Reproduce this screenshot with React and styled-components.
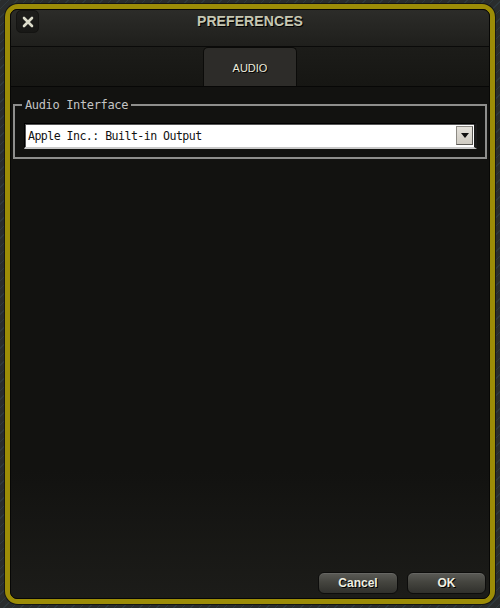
import React from "react";
import styled, { createGlobalStyle } from "styled-components";

const Global = createGlobalStyle`
  html, body { margin: 0; padding: 0; }
  body {
    width: 500px;
    height: 608px;
    overflow: hidden;
    background-color: #2a2d2d;
    background-image: repeating-linear-gradient(
      135deg,
      rgba(70, 110, 130, 0.18) 0px,
      rgba(70, 110, 130, 0.18) 1px,
      transparent 1px,
      transparent 6px
    );
    font-family: "Liberation Sans", Arial, sans-serif;
  }
`;

const Frame = styled.div`
  box-sizing: border-box;
  margin: 4px 5px 0 5px;
  height: 600px;
  border: 5px solid #9c8c07;
  border-radius: 13px;
  box-shadow: 0 0 0 1px #151614;
  display: flex;
  flex-direction: column;
  background: #0c0c0a;
`;

const Panel = styled.div`
  flex: 1;
  display: flex;
  flex-direction: column;
  border: 1px solid #070706;
  border-radius: 7px;
  overflow: hidden;
`;

const TitleBar = styled.div`
  height: 36px;
  border-bottom: 1px solid #0a0a09;
  background: linear-gradient(#2c2c29, #1f1f1c);
  display: grid;
  grid-template-columns: 23px 1fr 23px;
  align-items: start;
  padding: 0 5px;
`;

const CloseButton = styled.button`
  width: 23px;
  height: 23px;
  padding: 0;
  margin: 0;
  border: 1px solid #141412;
  border-radius: 5px;
  background: linear-gradient(#1e1e1c, #181816);
  display: flex;
  align-items: center;
  justify-content: center;
  cursor: pointer;
`;

const Title = styled.h1`
  margin: 0;
  text-align: center;
  line-height: 23px;
  font-size: 14px;
  font-weight: bold;
  color: #c6c7b2;
  text-shadow: 1px 1px 0 #000;
  letter-spacing: 0.1px;
`;

const TabBar = styled.div`
  height: 39px;
  border-bottom: 1px solid #070706;
  background: linear-gradient(#1c1c19, #161613);
  display: flex;
  justify-content: center;
  align-items: stretch;
`;

const Tab = styled.div`
  box-sizing: border-box;
  width: 94px;
  border: 1px solid #0b0b09;
  border-bottom: none;
  border-radius: 5px 5px 0 0;
  background: ${(p) => (p.$active ? "#2d2c29" : "transparent")};
  color: #ecebdc;
  font-size: 11px;
  text-shadow: 1px 1px 0 #000;
  display: flex;
  align-items: center;
  justify-content: center;
  padding-top: 1px;
`;

const Content = styled.div`
  flex: 1;
  display: flex;
  flex-direction: column;
  padding: 11px 2px 4px 2px;
  background: linear-gradient(#121210 0%, #121210 75%, #1c1c19 100%);
`;

const Group = styled.fieldset`
  margin: 0;
  border: 2px solid #8e8e8c;
  padding: 11px 8px 8px 9px;
`;

const Legend = styled.legend`
  margin-left: -2px;
  padding: 0 3px;
  font-family: "DejaVu Sans Mono", "Liberation Mono", monospace;
  font-size: 12px;
  letter-spacing: -0.35px;
  line-height: 14px;
  color: #c4c4c4;
`;

const Select = styled.div`
  box-sizing: border-box;
  height: 26px;
  display: flex;
  align-items: center;
  background: #ffffff;
  border: 1px solid #000;
  border-right: 3px solid #1a1a1a;
  border-bottom: 2px solid #c8c8c8;
  box-shadow: inset 1px 1px 0 #555;
  padding: 0 1px 0 3px;
`;

const SelectText = styled.span`
  flex: 1;
  font-family: "DejaVu Sans Mono", "Liberation Mono", monospace;
  font-size: 11.6px;
  letter-spacing: -0.55px;
  color: #111;
  padding-top: 1px;
`;

const Arrow = styled.div`
  box-sizing: border-box;
  width: 17px;
  height: 19px;
  background: linear-gradient(#e4e1da, #cfcbc2);
  border: 1px solid #8d8a84;
  border-right-color: #5a5854;
  border-bottom-color: #5a5854;
  display: flex;
  align-items: center;
  justify-content: center;
`;

const Footer = styled.div`
  margin-top: auto;
  display: flex;
  justify-content: flex-end;
  gap: 9px;
  padding-right: 1px;
`;

const Button = styled.button`
  box-sizing: border-box;
  width: ${(p) => p.$w}px;
  height: 22px;
  border: 1px solid #0d0d0c;
  border-radius: 6px;
  background: linear-gradient(#5b5b57 0%, #45453f 45%, #30302c 100%);
  box-shadow: inset 0 1px 0 rgba(255, 255, 255, 0.08);
  color: #efefe2;
  font-family: "Liberation Sans", Arial, sans-serif;
  font-size: 12px;
  font-weight: bold;
  text-shadow: 1px 1px 0 #000;
  padding: 0;
  cursor: pointer;
`;

export default function App() {
  return (
    <>
      <Global />
      <Frame>
        <Panel>
          <TitleBar>
            <CloseButton aria-label="Close">
              <svg width="12" height="12" viewBox="0 0 12 12">
                <path
                  d="M2 2 L10 10 M10 2 L2 10"
                  stroke="#dcdccb"
                  strokeWidth="2.6"
                  strokeLinecap="round"
                />
              </svg>
            </CloseButton>
            <Title>PREFERENCES</Title>
            <span />
          </TitleBar>
          <TabBar>
            <Tab $active>AUDIO</Tab>
          </TabBar>
          <Content>
            <Group>
              <Legend>Audio Interface</Legend>
              <Select>
                <SelectText>Apple Inc.: Built-in Output</SelectText>
                <Arrow>
                  <svg width="8" height="5" viewBox="0 0 8 5">
                    <path d="M0 0 H8 L4 5 Z" fill="#111" />
                  </svg>
                </Arrow>
              </Select>
            </Group>
            <Footer>
              <Button $w={80}>Cancel</Button>
              <Button $w={79}>OK</Button>
            </Footer>
          </Content>
        </Panel>
      </Frame>
    </>
  );
}
